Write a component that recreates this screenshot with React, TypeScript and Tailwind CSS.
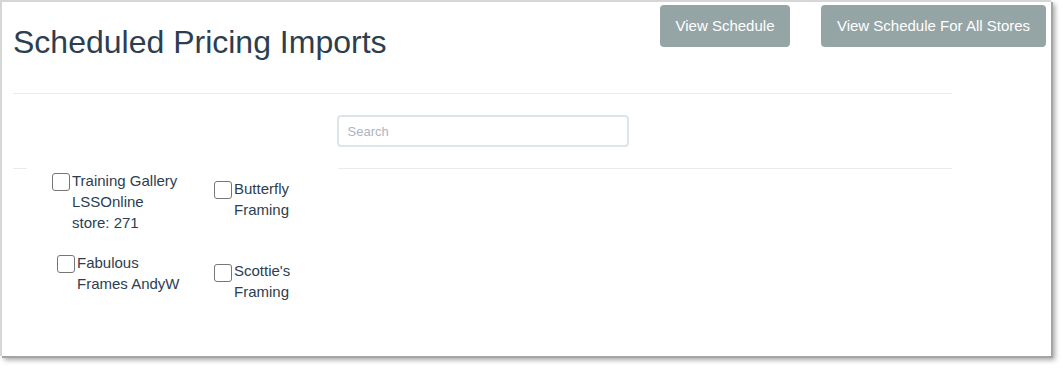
import React from 'react';

type Store = { lines: string[]; pad: string; box: string };

const Check: React.FC<{ className?: string }> = ({ className }) => (
  <span
    className={`block w-[18px] h-[18px] shrink-0 rounded-[3px] border border-[#767676] bg-white ${className ?? ''}`}
  />
);

const StoreItem: React.FC<{ store: Store }> = ({ store }) => (
  <label className={`flex items-start gap-[2px] ${store.pad}`}>
    <Check className={store.box} />
    <span className="text-[15px] leading-[21px] text-[#2c3e50]">
      {store.lines.map((l, i) => (
        <span key={i} className="block whitespace-nowrap">
          {l}
        </span>
      ))}
    </span>
  </label>
);

export default function App() {
  const rowOne: Store[] = [
    { lines: ['Training Gallery', 'LSSOnline', 'store: 271'], pad: 'w-[201px] pl-[39px] pt-[1px]', box: 'mt-[3px]' },
    { lines: ['Butterfly', 'Framing'], pad: 'pt-[9px]', box: 'mt-[3px]' },
  ];
  const rowTwo: Store[] = [
    { lines: ['Fabulous', 'Frames AndyW'], pad: 'w-[201px] pl-[44px]', box: 'mt-[3px]' },
    { lines: ['Scottie\'s', 'Framing'], pad: 'pt-[8px]', box: 'mt-[4px]' },
  ];

  return (
    <div className="w-[1063px] h-[368px] bg-white font-['Liberation_Sans',Arial,sans-serif]">
      <div className="w-[1051px] h-[356px] border-t-2 border-l-2 border-[#d6d6d6] bg-white shadow-[2px_2px_0_#a4a4a4,4px_4px_5px_rgba(0,0,0,0.35)]">
        {/* header */}
        <div className="flex items-start h-[90px] pl-[11px] pr-[5px]">
          <h1 className="mt-[23px] text-[32px] leading-[35px] text-[#2c3e50]">Scheduled Pricing Imports</h1>
          <div className="ml-auto mt-[3px] flex gap-[31px]">
            <button className="w-[130px] h-[42px] rounded-[4px] bg-[#95a5a6] text-white text-[15px]">
              View Schedule
            </button>
            <button className="w-[225px] h-[42px] rounded-[4px] bg-[#95a5a6] text-white text-[15px]">
              View Schedule For All Stores
            </button>
          </div>
        </div>

        <div className="ml-[11px] w-[939px]">
          <div className="mt-px h-px bg-[#e8ebed]" />

          <div className="mt-[21px] flex justify-center">
            <input
              placeholder="Search"
              className="w-[292px] h-[32px] pl-[9px] rounded-[4px] border-2 border-[#dce4ec] text-[13px] text-[#2c3e50] placeholder:text-[#acb6c0] outline-none"
            />
          </div>

          <div className="mt-[21px] flex h-px">
            <div className="w-[14px] bg-[#e8ebed]" />
            <div className="w-[311px]" />
            <div className="flex-1 bg-[#e8ebed]" />
          </div>

          <div className="flex">
            {rowOne.map((s, i) => (
              <StoreItem key={i} store={s} />
            ))}
          </div>
          <div className="mt-[19px] flex">
            {rowTwo.map((s, i) => (
              <StoreItem key={i} store={s} />
            ))}
          </div>
        </div>
      </div>
    </div>
  );
}
